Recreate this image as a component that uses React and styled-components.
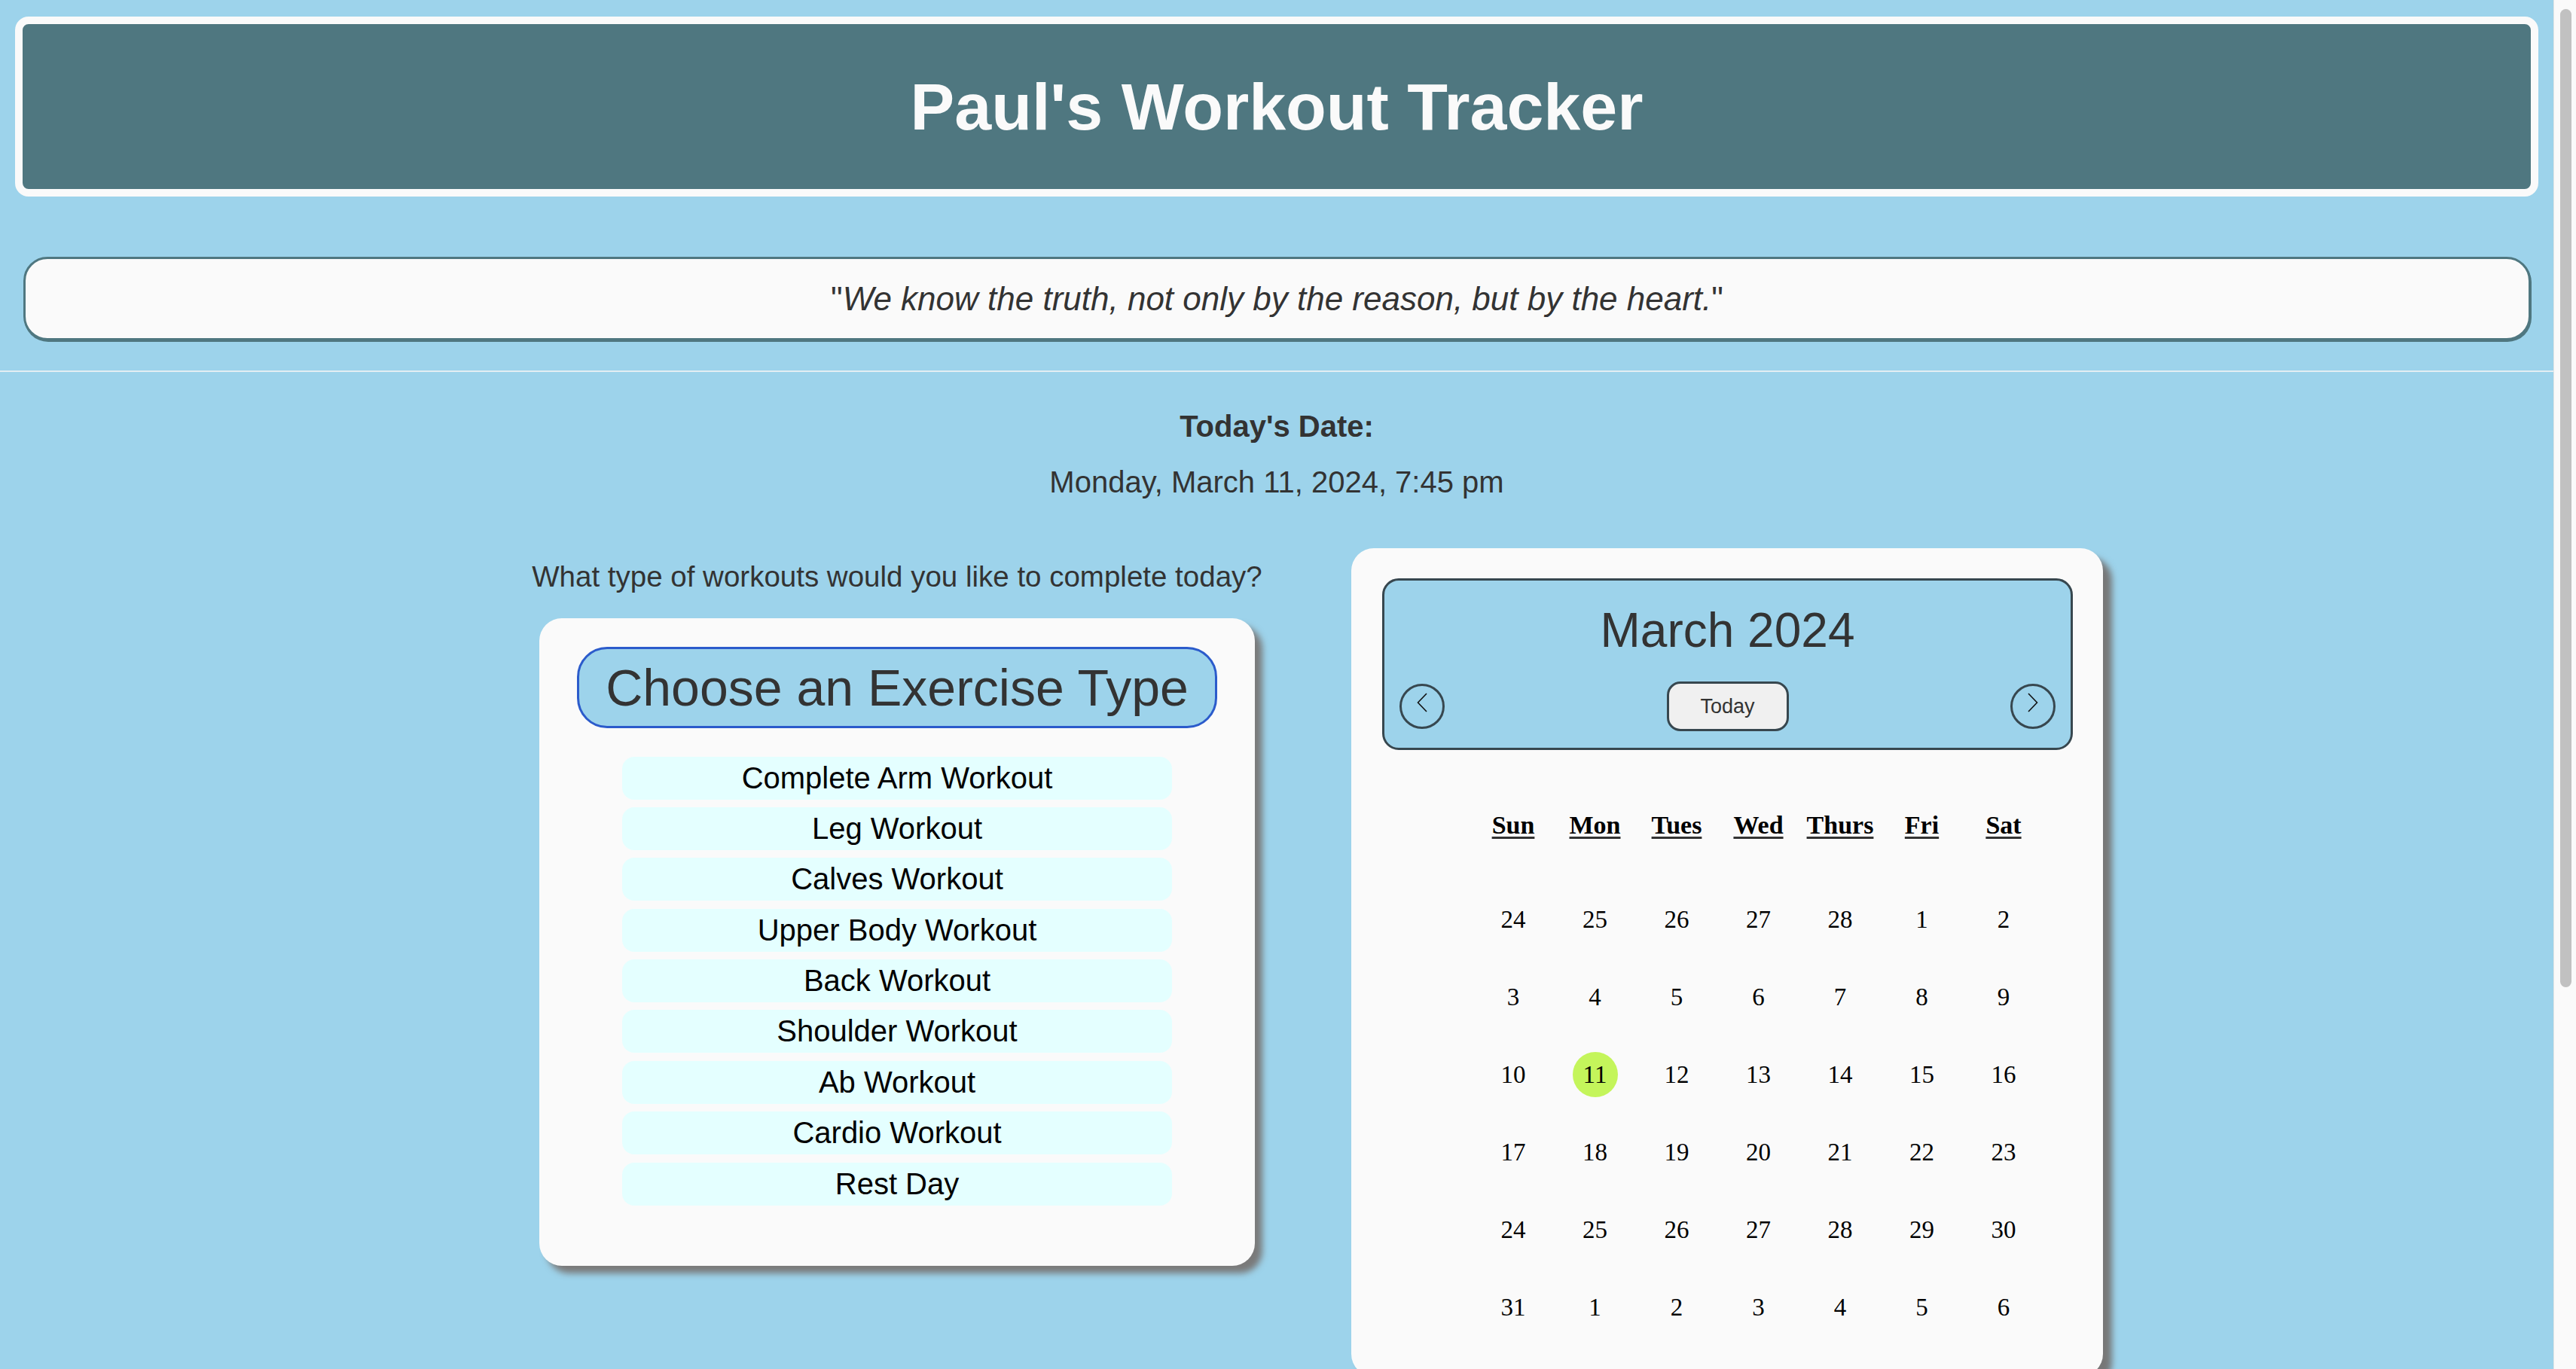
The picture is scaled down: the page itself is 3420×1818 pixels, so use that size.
import React from 'react';
import styled, { createGlobalStyle } from 'styled-components';

const GlobalStyle = createGlobalStyle`
    html, body {
        margin:0;
        padding:0;
    }
    body {
        background-color:#9dd3eb;
        font-family:"Liberation Sans", Arial, Helvetica, sans-serif;
        color:#333;
    }
`;

const Page = styled.div`
    min-height:2500px;
    padding-right:30px;
`;

// the browser's scroll rail seen on the right of the window
const ScrollRail = styled.div`
    position:fixed;
    top:0;
    right:0;
    width:30px;
    height:100vh;
    box-sizing:border-box;
    padding:12px 6px 0 8px;
    background-color:#fafafa;
    border-left:1px solid #e4e4e4;
`;

const ScrollThumb = styled.div`
    height:1299px;
    border-radius:8px;
    background-color:#c1c1c1;
`;

const TopSection = styled.header`
    padding:22px 0 40px;
    border-bottom:2px solid #e3eef3;
`;

const TitleBar = styled.div`
    margin:0 20px;
    border:10px solid #fafafa;
    border-radius:18px;
    background-color:#4f7780;
`;

const Title = styled.h1`
    margin:0;
    padding:59px 0;
    font-size:88px;
    line-height:101px;
    font-weight:700;
    color:#fafafa;
    text-align:center;
`;

const QuoteBox = styled.div`
    margin:80px 30px 0 31px;
    height:111px;
    box-sizing:border-box;
    border:3px solid #4f7780;
    border-radius:32px;
    box-shadow:1px 2px 0 #4f7780;
    background-color:#fafafa;
    font-size:44px;
    line-height:105px;
    text-align:center;
    color:#333;

    em {
        font-style:italic;
    }
`;

const DateBlock = styled.section`
    text-align:center;
    padding-top:49px;
`;

const DateLabel = styled.h3`
    margin:0;
    font-size:40px;
    font-weight:700;
    line-height:46px;
`;

const DateValue = styled.p`
    margin:28px 0 0;
    font-size:40px;
    line-height:46px;
`;

const MainRow = styled.main`
    display:flex;
    justify-content:center;
    align-items:flex-start;
    gap:113px;
    margin-top:65px;
    padding-left:103px;
`;

const ExerciseColumn = styled.div`
    width:980px;
    display:flex;
    flex-direction:column;
    align-items:center;
    padding-top:16px;
`;

const Question = styled.p`
    margin:0;
    font-size:38.5px;
    line-height:44px;
    white-space:nowrap;
`;

const Card = styled.div`
    box-sizing:border-box;
    background-color:#fafafa;
    border-radius:30px;
`;

const ExerciseCard = styled(Card)`
    width:950px;
    margin-top:33px;
    padding:38px 50px 80px;
    box-shadow:10px 10px 9px #7a7a7a;
`;

const ChooseTitle = styled.h2`
    margin:0;
    height:108px;
    box-sizing:border-box;
    border:3px solid #2b5bcb;
    border-radius:40px;
    background-color:#9dd3eb;
    font-size:68px;
    font-weight:400;
    line-height:102px;
    text-align:center;
    color:#333;
`;

const ExerciseList = styled.ul`
    list-style:none;
    margin:37.5px 60px 0;
    padding:0;
    display:flex;
    flex-direction:column;
    gap:10.4px;
`;

const ExerciseItem = styled.li`
    height:57px;
    line-height:57px;
    border-radius:16px;
    background-color:#e4ffff;
    font-size:40px;
    color:#000;
    text-align:center;
    cursor:pointer;
`;

const CalendarCard = styled(Card)`
    width:998px;
    padding:40px 40px 40px 41px;
    box-shadow:12px 12px 8px #777;
`;

const CalendarHeader = styled.div`
    height:228px;
    box-sizing:border-box;
    padding:30px 20px 22px;
    border:3px solid #37474f;
    border-radius:22px;
    background-color:#9dd3eb;
`;

const MonthTitle = styled.h2`
    margin:0;
    font-size:64px;
    font-weight:400;
    line-height:73.5px;
    text-align:center;
    color:#333;
`;

const Controls = styled.div`
    display:flex;
    justify-content:space-between;
    align-items:center;
    margin-top:30.5px;
`;

const NavButton = styled.button`
    width:60px;
    height:60px;
    padding:0 0 10px;
    box-sizing:border-box;
    border:3px solid #37474f;
    border-radius:50%;
    background:transparent;
    display:flex;
    align-items:center;
    justify-content:center;
    cursor:pointer;
`;

const TodayButton = styled.button`
    width:162px;
    height:66px;
    box-sizing:border-box;
    border:3px solid #37474f;
    border-radius:18px;
    background-color:#f0f0f0;
    font-family:"Liberation Sans", Arial, sans-serif;
    font-size:27px;
    color:#333;
    cursor:pointer;
`;

const Grid = styled.div`
    display:grid;
    grid-template-columns:repeat(7, 108.5px);
    justify-content:center;
    padding-left:82px;
    font-family:"Liberation Serif", "Times New Roman", serif;
    color:#000;
`;

const WeekHeader = styled(Grid)`
    margin-top:80px;
`;

const WeekDay = styled.span`
    font-size:34px;
    font-weight:700;
    line-height:40px;
    text-align:center;
    text-decoration:underline;
    text-decoration-thickness:3px;
    text-decoration-color:#333;
    text-underline-offset:4px;
`;

const DaysGrid = styled(Grid)`
    margin-top:53.5px;
    grid-auto-rows:103px;
`;

const DayCell = styled.div`
    display:flex;
    align-items:center;
    justify-content:center;
`;

const DayNumber = styled.span`
    display:inline-block;
    width:60px;
    height:60px;
    line-height:60px;
    border-radius:50%;
    font-size:33px;
    text-align:center;
    background-color:${props => props.$today ? '#c4f55b' : 'transparent'};
`;

const exercises = [
    'Complete Arm Workout',
    'Leg Workout',
    'Calves Workout',
    'Upper Body Workout',
    'Back Workout',
    'Shoulder Workout',
    'Ab Workout',
    'Cardio Workout',
    'Rest Day'
];

const weekDays = ['Sun', 'Mon', 'Tues', 'Wed', 'Thurs', 'Fri', 'Sat'];

const weeks = [
    [24, 25, 26, 27, 28, 1, 2],
    [3, 4, 5, 6, 7, 8, 9],
    [10, 11, 12, 13, 14, 15, 16],
    [17, 18, 19, 20, 21, 22, 23],
    [24, 25, 26, 27, 28, 29, 30],
    [31, 1, 2, 3, 4, 5, 6]
];

const Chevron = ({ flip }) => (
    <svg width="14" height="26" viewBox="0 0 14 26" style={flip ? { transform: 'scaleX(-1)' } : undefined}>
        <polyline points="13,1 1.5,13 13,25" fill="none" stroke="#111" strokeWidth="1.6" />
    </svg>
);

const App = () => {
    return (
        <Page>
            <GlobalStyle />
            <TopSection>
                <TitleBar>
                    <Title>Paul's Workout Tracker</Title>
                </TitleBar>
                <QuoteBox>
                    "<em>We know the truth, not only by the reason, but by the heart.</em>"
                </QuoteBox>
            </TopSection>

            <DateBlock>
                <DateLabel>Today's Date:</DateLabel>
                <DateValue>Monday, March 11, 2024, 7:45 pm</DateValue>
            </DateBlock>

            <MainRow>
                <ExerciseColumn>
                    <Question>What type of workouts would you like to complete today?</Question>
                    <ExerciseCard>
                        <ChooseTitle>Choose an Exercise Type</ChooseTitle>
                        <ExerciseList>
                            {exercises.map(name => <ExerciseItem key={name}>{name}</ExerciseItem>)}
                        </ExerciseList>
                    </ExerciseCard>
                </ExerciseColumn>

                <CalendarCard>
                    <CalendarHeader>
                        <MonthTitle>March 2024</MonthTitle>
                        <Controls>
                            <NavButton aria-label="Previous month"><Chevron /></NavButton>
                            <TodayButton>Today</TodayButton>
                            <NavButton aria-label="Next month"><Chevron flip /></NavButton>
                        </Controls>
                    </CalendarHeader>
                    <WeekHeader>
                        {weekDays.map(day => <WeekDay key={day}>{day}</WeekDay>)}
                    </WeekHeader>
                    <DaysGrid>
                        {weeks.map((week, w) => week.map((day, d) => (
                            <DayCell key={w + '-' + d}>
                                <DayNumber $today={w === 2 && day === 11}>{day}</DayNumber>
                            </DayCell>
                        )))}
                    </DaysGrid>
                </CalendarCard>
            </MainRow>

            <ScrollRail>
                <ScrollThumb />
            </ScrollRail>
        </Page>
    );
};

export default App;
